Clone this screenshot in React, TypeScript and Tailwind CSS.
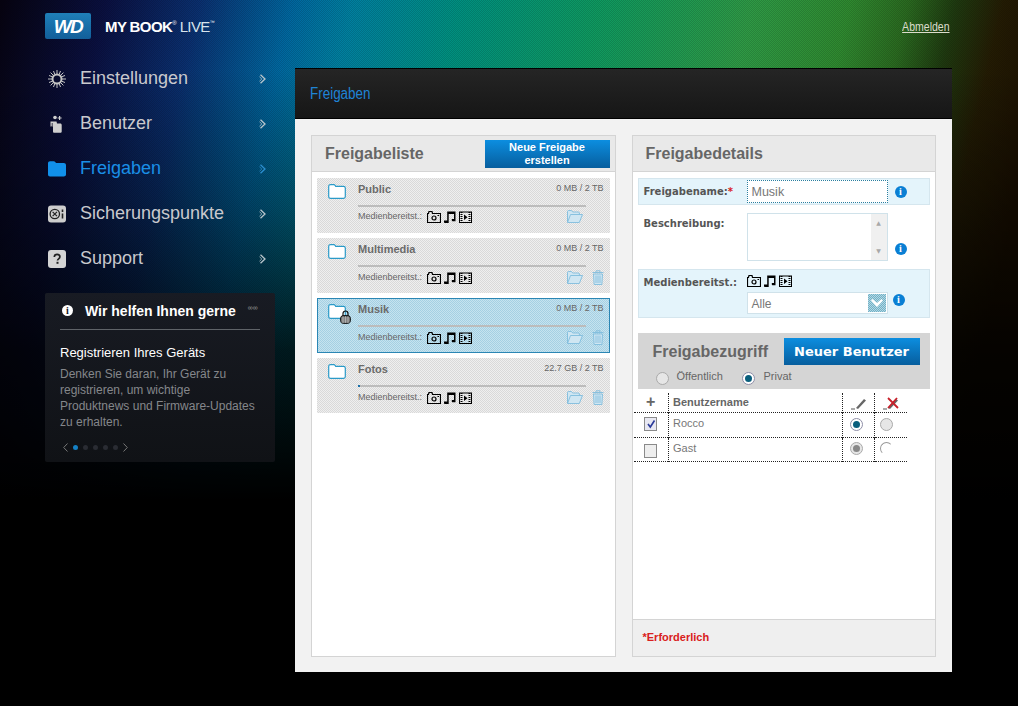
import React from 'react';

const shares = [
  { name: 'Public', size: '0 MB / 2 TB', trash: false, locked: false, used: 0 },
  { name: 'Multimedia', size: '0 MB / 2 TB', trash: true, locked: false, used: 0 },
  { name: 'Musik', size: '0 MB / 2 TB', trash: true, locked: true, used: 0 },
  { name: 'Fotos', size: '22.7 GB / 2 TB', trash: true, locked: false, used: 1 },
];

const GearIcon = () => (
  <svg width="18" height="18" viewBox="0 0 18 18" fill="none" stroke="#c4c4c4">
    <circle cx="9" cy="9" r="4.500" strokeWidth="2" />
    <path strokeWidth="1" d="M9 0v4M9 14v4M0 9h4M14 9h4M2.600 2.600l2.800 2.800M12.600 12.600l2.800 2.800M15.400 2.600l-2.800 2.800M5.400 12.600l-2.800 2.800M5.500 1l1.300 3.400M12.500 1l-1.300 3.400M5.500 17l1.300-3.400M12.500 17l-1.300-3.400M1 5.500l3.400 1.300M1 12.500l3.400-1.300M17 5.500l-3.400 1.300M17 12.500l-3.400-1.300" />
  </svg>
);

const UserIcon = () => (
  <svg width="18" height="18" viewBox="0 0 18 18" fill="#cfcfcf">
    <circle cx="7" cy="2.500" r="1.800" />
    <path d="M11 1h1.200v1.400h1.400v1.200h-1.400V5H11V3.600H9.600V2.400H11z" />
    <path d="M2.500 6.500h6l.5 2h3.200c1 0 1.500.6 1.500 1.500v6.500c0 .8-.5 1.300-1.300 1.300H6.300c-.8 0-1.300-.5-1.300-1.300v-4.800H2.500z" />
    <path d="M4.200 8v3M2.500 11.700h2.500" stroke="#10122a" strokeWidth=".8" />
  </svg>
);

const FolderIcon = () => (
  <svg width="18" height="16" viewBox="0 0 18 16" fill="#1190ea">
    <path d="M0 2.200C0 1 .8.200 2 .200h3.600c.8 0 1.300.3 1.800 1l.7.900H15.800C17 2.100 18 3 18 4.200v9.200c0 1.200-1 2-2.200 2H2c-1.200 0-2-.8-2-2z" />
  </svg>
);

const SafeIcon = () => (
  <svg width="18" height="18" viewBox="0 0 18 18">
    <rect width="18" height="17" y=".5" rx="3" fill="#cdcdcd" />
    <circle cx="6.800" cy="9" r="4.700" fill="none" stroke="#222" strokeWidth="1.300" />
    <path d="M4.600 6.800l4.400 4.400M9 6.800l-4.400 4.400" stroke="#222" strokeWidth="1.200" />
    <path d="M14.500 4.500v2.500M14.500 8.500v5" stroke="#222" strokeWidth="1.600" />
  </svg>
);

const HelpIcon = () => (
  <svg width="18" height="18" viewBox="0 0 18 18">
    <rect width="18" height="18" rx="3" fill="#d4d4d4" />
    <path d="M6.300 7c0-1.800 1.200-2.700 2.800-2.700S11.900 5.200 11.900 6.800c0 2-2.400 2-2.400 3.800" fill="none" stroke="#222" strokeWidth="1.700" />
    <rect x="8.500" y="11.800" width="2" height="2" fill="#222" />
  </svg>
);

const Chevron = ({ active }: { active?: boolean }) => (
  <svg width="8" height="10" viewBox="0 0 8 10" fill="none" stroke={active ? '#2c8fd0' : '#b9c6cc'} strokeWidth="1.300">
    <path d="M1.500.8L6 5l-4.500 4.200" />
    <path d="M.5 2.800L2.800 5 .5 7.200" strokeWidth=".8" />
  </svg>
);

const PhotoGlyph = () => (
  <svg width="14" height="12" viewBox="0 0 14 12" fill="none" stroke="#000">
    <path d="M.5 2.500h1l.5-2h3l.5 2h8v9H.5z" strokeWidth="1.200" />
    <circle cx="7" cy="7" r="2" strokeWidth="1.200" />
    <rect x="10.500" y="4" width="1.500" height="1" fill="#000" stroke="none" />
  </svg>
);

const MusicGlyph = () => (
  <svg width="12" height="12" viewBox="0 0 12 12" fill="#000">
    <path d="M3.200.5h8.300v9H10V3H4.700v7.500H3.200zM0 9.500h4.700V12H1C.4 12 0 11.500 0 11zM7.800 8h3.700v2.300H8.800c-.6 0-1-.4-1-1z" />
  </svg>
);

const FilmGlyph = () => (
  <svg width="13" height="12" viewBox="0 0 13 12" fill="none" stroke="#000">
    <rect x=".5" y="1" width="12" height="10.500" />
    <path d="M2.500 1v10.500M10.500 1v10.500" strokeDasharray="1 1" strokeWidth="2" />
    <path d="M5 3.500l3.500 2.700L5 9z" fill="#000" stroke="none" />
  </svg>
);

const MediaGlyphs = () => (
  <div className="flex items-center gap-[3px]">
    <PhotoGlyph />
    <MusicGlyph />
    <FilmGlyph />
  </div>
);

const ShareFolder = ({ locked }: { locked: boolean }) => (
  <div className="relative h-[15px] w-[18px]">
    <svg width="18" height="15" viewBox="0 0 18 15" fill="#fff" stroke="#2a9ac8" strokeWidth="1.200">
      <path d="M.7 2.500C.7 1.300 1.300.7 2.500.7h3.300c.7 0 1 .2 1.400.8l.5.8h7.800c1 0 1.800.7 1.800 1.700v8.500c0 1-.8 1.800-1.800 1.800H2.500c-1 0-1.800-.8-1.800-1.800z" />
    </svg>
    {locked && (
      <svg className="absolute -bottom-[5px] -right-[5px]" width="11" height="14" viewBox="0 0 11 14">
        <path d="M3 6V3.500a2.500 2.500 0 015 0V6" fill="none" stroke="#111" strokeWidth="1.200" />
        <rect x=".7" y="5.700" width="9.600" height="7.600" rx="2.500" fill="#666" stroke="#000" />
        <path d="M1 8h9M1 10h9M1 12h9M3 6v7M5.500 6v7M8 6v7" stroke="#ddd" strokeWidth=".5" />
      </svg>
    )}
  </div>
);

const OpenFolder = () => (
  <svg width="16" height="13" viewBox="0 0 16 13" fill="#cfe6f2" stroke="#7fbcdc" strokeWidth=".9">
    <path d="M.5 12V1.500C.5 1 .9.500 1.500.500h3l1.200 1.500h5.800c.5 0 .9.400.9 1V4.500" />
    <path d="M.5 12.500L3.500 4.500h12l-3.200 8z" />
  </svg>
);

const TrashIcon = () => (
  <svg width="12" height="15" viewBox="0 0 12 15" fill="#cfe6f2" stroke="#7fbcdc" strokeWidth=".9">
    <path d="M.5 2.500h11M4 2.300V.8h4v1.500" fill="none" />
    <path d="M1.500 4h9l-.6 10.500H2.100z" />
    <path d="M4 5.500v7.500M6 5.500v7.500M8 5.500v7.500" fill="none" />
  </svg>
);

const InfoDot = () => (
  <span className="flex h-[12px] w-[12px] shrink-0 items-center justify-center rounded-full bg-[#0a7fd4] font-['Liberation_Serif',serif] text-[10px] font-bold leading-none text-white">
    i
  </span>
);

const Radio = ({ on, muted, cut }: { on?: boolean; muted?: boolean; cut?: boolean }) => (
  <span
    className={`inline-flex h-[13px] w-[13px] items-center justify-center rounded-full border align-middle ${
      cut ? 'border-[#999] border-r-transparent border-b-white bg-white' : on && !muted ? 'border-[#8f8fa8] bg-white' : 'border-[#aaa] bg-[#e6e6e6]'
    }`}
  >
    {on && <span className={`h-[7px] w-[7px] rounded-full ${muted ? 'bg-[#888]' : 'bg-[#0a5f7d]'}`} />}
  </span>
);

const PenIcon = ({ cross }: { cross?: boolean }) => (
  <svg className="inline align-middle" width="18" height="14" viewBox="0 0 18 14" fill="none">
    <path d="M1 13h4" stroke="#555" />
    <path d="M6 12l8-9 2 1.500L8 13z" fill="#666" />
    {cross && <path d="M6 2l10 10M15 2L6 12" stroke="#c8202a" strokeWidth="1.800" />}
  </svg>
);

const NavItem = ({ label, icon, active }: { label: string; icon: React.ReactNode; active?: boolean }) => (
  <div className="flex h-[45px] items-center">
    <div className="flex w-[35px] items-center pl-[3px]">{icon}</div>
    <span className={`w-[179px] text-[18px] ${active ? 'text-[#1a8fe6]' : 'text-[#c9c9cd]'}`}>{label}</span>
    <Chevron active={active} />
  </div>
);

const ShareRow = ({ share }: { share: (typeof shares)[number] }) => {
  const selected = share.locked;
  return (
    <div
      className={`flex h-[55px] bg-[length:2px_2px] ${
        selected
          ? 'border border-[#2a86b4] bg-[conic-gradient(#a5d0e3_25%,#c6e3ef_0_50%,#a5d0e3_0_75%,#c6e3ef_0)]'
          : 'bg-[conic-gradient(#d9d9d9_25%,#efefef_0_50%,#d9d9d9_0_75%,#efefef_0)]'
      }`}
    >
      <div className={`shrink-0 ${selected ? 'w-[40px] pl-[10px] pt-[5px]' : 'w-[41px] pl-[11px] pt-[6px]'}`}>
        <ShareFolder locked={share.locked} />
      </div>
      <div className={`flex-1 ${selected ? 'pr-[5px] pt-[3px]' : 'pr-[6px] pt-[4px]'}`}>
        <div className="flex h-[14px] items-center justify-between">
          <span className="text-[11px] font-bold text-[#6b6b6b]">{share.name}</span>
          <span className="text-[9px] text-[#666]">{share.size}</span>
        </div>
        <div className="mt-[9px] mr-[18px] h-[2px] bg-[#bcbcbc]">
          {share.used > 0 && <div className="h-[2px] w-[2px] bg-[#1a6fa8]" />}
        </div>
        <div className="mt-[3px] flex items-center">
          <span className="w-[69px] text-[9px] text-[#666]">Medienbereitst.:</span>
          <MediaGlyphs />
          <div className="ml-auto flex items-center gap-[9px]">
            <OpenFolder />
            {share.trash ? <TrashIcon /> : <span className="w-[12px]" />}
          </div>
        </div>
      </div>
    </div>
  );
};

export default function App() {
  return (
    <div className="relative h-[706px] w-[1018px] overflow-hidden bg-black bg-[length:2px_2px,auto,auto] font-['Liberation_Sans',Arial,sans-serif] bg-[conic-gradient(rgba(0,0,0,0.14)_25%,rgba(0,0,0,0)_0_50%,rgba(0,0,0,0.14)_0_75%,rgba(0,0,0,0)_0),linear-gradient(180deg,rgba(0,0,0,0)_0,rgba(0,0,0,0)_70px,rgba(0,0,0,0.35)_200px,rgba(0,0,0,0.8)_350px,#000_500px),linear-gradient(103deg,#060310_0,#0a1040_9%,#0a3070_17%,#0068a0_25%,#0080a0_30%,#009080_39%,#0f9a60_51%,#2f9a45_64%,#2f8a30_72%,#2a6a20_77%,#1f3a10_81%,#241c04_85%,#1c1000_90%)]">
      <div className="flex">
        {/* Left column */}
        <div className="w-[295px] shrink-0 pl-[45px]">
          <div className="flex h-[56px] items-start pt-[13px]">
            <div className="flex h-[26px] w-[46px] items-center justify-center rounded-[2px] bg-gradient-to-b from-[#1f7fb8] to-[#125f9a] text-[19px] font-bold italic leading-none tracking-[-1.5px] text-white">
              WD
            </div>
            <div className="ml-[14px] flex h-[26px] items-center text-[15px] leading-none text-white">
              <span className="font-bold tracking-[-0.6px]">MY BOOK</span>
              <span className="mb-[6px] text-[6px]">®</span>
              <span className="ml-[3px] font-normal tracking-[-0.6px] text-[#d8e4ec]">LIVE</span>
              <span className="mb-[7px] text-[5px]">™</span>
            </div>
          </div>
          <div className="w-[230px]">
            <NavItem label="Einstellungen" icon={<GearIcon />} />
            <NavItem label="Benutzer" icon={<UserIcon />} />
            <NavItem label="Freigaben" icon={<FolderIcon />} active />
            <NavItem label="Sicherungspunkte" icon={<SafeIcon />} />
            <NavItem label="Support" icon={<HelpIcon />} />
            <div className="mt-[12px] h-[169px] rounded-[2px] bg-gradient-to-b from-[#181b23] to-[#101216] px-[15px] pt-[10px]">
              <div className="flex h-[27px] items-start border-b border-[#5f6368]">
                <span className="mt-[2px] ml-[2px] flex h-[11px] w-[11px] items-center justify-center rounded-full bg-white font-['Liberation_Serif',serif] text-[10px] font-bold leading-none text-[#14161c]">
                  i
                </span>
                <span className="ml-[12px] text-[14px] font-bold leading-[16px] text-white">Wir helfen Ihnen gerne</span>
                <span className="ml-[12px] mt-[1px] text-[7px] leading-[8px] text-[#9a9a9a]">∞∞</span>
              </div>
              <div className="mt-[15px] text-[13px] leading-[15px] text-white">Registrieren Ihres Geräts</div>
              <p className="mt-[6px] w-[200px] text-[12px] leading-[16px] text-[#85878b]">
                Denken Sie daran, Ihr Gerät zu registrieren, um wichtige Produktnews und Firmware-Updates zu erhalten.
              </p>
              <div className="mt-[13px] ml-[3px] flex items-center gap-[5px]">
                <svg width="5" height="9" viewBox="0 0 5 9" fill="none" stroke="#777"><path d="M4.500.5L.7 4.500l3.800 4" /></svg>
                <span className="h-[5px] w-[5px] rounded-full bg-[#1580c4]" />
                <span className="h-[5px] w-[5px] rounded-full bg-[#2a2c33]" />
                <span className="h-[5px] w-[5px] rounded-full bg-[#2a2c33]" />
                <span className="h-[5px] w-[5px] rounded-full bg-[#2a2c33]" />
                <span className="h-[5px] w-[5px] rounded-full bg-[#2a2c33]" />
                <svg width="5" height="9" viewBox="0 0 5 9" fill="none" stroke="#777"><path d="M.5.5l3.800 4-3.800 4" /></svg>
              </div>
            </div>
          </div>
        </div>

        {/* Right column */}
        <div className="w-[657px] shrink-0">
          <div className="flex h-[68px] items-start justify-end pr-[2px] pt-[20px]">
            <a className="origin-right scale-x-[0.81] text-[13px] leading-[14px] text-[#dcdccc] underline">Abmelden</a>
          </div>
          <div className="flex h-[51px] items-center border-y border-black bg-gradient-to-b from-[#252525] to-[#161616] pl-[15px]">
            <span className="origin-left scale-x-[0.84] text-[16px] text-[#1f84d6]">Freigaben</span>
          </div>
          <div className="flex h-[553px] gap-[16px] bg-[#f2f2f2] p-[16px] pb-[15px]">
            {/* Share list */}
            <div className="flex w-[305px] flex-col border border-[#d4d4d4] bg-white">
              <div className="flex h-[36px] shrink-0 items-center justify-between border-b border-[#d4d4d4] bg-[#e9e9e9] pl-[13px] pr-[5px]">
                <span className="text-[16px] font-bold text-[#666]">Freigabeliste</span>
                <button className="h-[28px] w-[125px] bg-gradient-to-b from-[#0c8ee0] to-[#075e9e] text-[11px] font-bold leading-[13px] text-white">
                  Neue Freigabe
                  <br />
                  erstellen
                </button>
              </div>
              <div className="flex flex-col gap-[5px] px-[5px] pt-[6px]">
                {shares.map((s) => (
                  <ShareRow key={s.name} share={s} />
                ))}
              </div>
            </div>

            {/* Share details */}
            <div className="flex w-[305px] flex-col border border-[#d4d4d4] bg-white">
              <div className="flex h-[36px] shrink-0 items-center border-b border-[#d4d4d4] bg-[#e9e9e9] pl-[13px]">
                <span className="text-[16px] font-bold text-[#666]">Freigabedetails</span>
              </div>
              <div className="flex-1 px-[5px] pt-[6px] font-['DejaVu_Sans',sans-serif]">
                <div className="flex h-[27px] items-center border border-[#d5e6ee] bg-[#e4f4fb] pl-[5px]">
                  <span className="w-[103px] pb-[1px] text-[10px] font-bold text-[#555]">
                    Freigabename:<span className="text-[#d92020]">*</span>
                  </span>
                  <div className="flex h-[23px] w-[141px] items-center border border-dotted border-[#2a7fa0] bg-white pl-[4px] pt-[1px] font-['Liberation_Sans',sans-serif] text-[12.5px] text-[#777]">
                    Musik
                  </div>
                  <span className="ml-[7px]"><InfoDot /></span>
                </div>

                <div className="flex h-[64px] pl-[6px] pt-[8px]">
                  <span className="w-[103px] pt-[3px] text-[10px] font-bold text-[#555]">Beschreibung:</span>
                  <div className="flex h-[48px] w-[141px] justify-end border border-[#d0e2ea] bg-white">
                    <div className="flex w-[16px] flex-col items-center justify-between bg-[#f0f0f0] py-[6px] text-[6px] leading-none text-[#a8a8a8]">
                      <span>▲</span>
                      <span>▼</span>
                    </div>
                  </div>
                  <span className="ml-[7px] mt-[30px]"><InfoDot /></span>
                </div>

                <div className="flex h-[49px] border border-[#d5e6ee] bg-[#e4f4fb] pl-[5px] pt-[5px]">
                  <span className="w-[103px] text-[10px] font-bold text-[#555]">Medienbereitst.:</span>
                  <div className="w-[141px]">
                    <MediaGlyphs />
                    <div className="mt-[5px] flex h-[22px] items-center justify-between border border-[#d0e2ea] bg-white pl-[4px] pr-[1px] font-['Liberation_Sans',sans-serif] text-[12px] text-[#777]">
                      <span className="pt-[1px]">Alle</span>
                      <span className="flex h-[18px] w-[18px] items-center justify-center bg-[conic-gradient(#6fb2c8_25%,#b5d6e2_0_50%,#6fb2c8_0_75%,#b5d6e2_0)] bg-[length:2px_2px]">
                        <svg width="12" height="8" viewBox="0 0 12 8" fill="#fff"><path d="M0 1.500L1.500 0 6 4l4.500-4L12 1.500 6 8z" /></svg>
                      </span>
                    </div>
                  </div>
                  <span className="ml-[5px] mt-[19px]"><InfoDot /></span>
                </div>

                <div className="mt-[15px] h-[56px] bg-[#d5d5d5] pl-[15px] pt-[5px]">
                  <div className="flex h-[27px] items-center">
                    <span className="w-[131px] font-['Liberation_Sans',sans-serif] text-[16px] font-bold text-[#666]">Freigabezugriff</span>
                    <button className="h-[27px] w-[136px] bg-gradient-to-b from-[#0c8ee0] to-[#075e9e] text-[13px] font-bold text-white">
                      Neuer Benutzer
                    </button>
                  </div>
                  <div className="mt-[3px] flex items-center pl-[3px] font-['Liberation_Sans',sans-serif] text-[11px] text-[#666]">
                    <Radio />
                    <span className="ml-[8px] w-[65px] pb-[4px]">Öffentlich</span>
                    <Radio on />
                    <span className="ml-[9px] pb-[4px]">Privat</span>
                  </div>
                </div>

                <table className="-ml-[4px] mt-[4px] w-[273px] table-fixed border-collapse font-['Liberation_Sans',sans-serif] text-[11px] text-[#666]">
                  <colgroup>
                    <col className="w-[35px]" />
                    <col className="w-[174px]" />
                    <col className="w-[32px]" />
                    <col className="w-[32px]" />
                  </colgroup>
                  <tbody>
                    <tr className="h-[19px] border-b border-dotted border-[#222]">
                      <td className="text-center text-[16px] font-bold leading-none">+</td>
                      <td className="border-l border-dotted border-[#222] pl-[4px] font-bold">Benutzername</td>
                      <td className="border-l border-dotted border-[#222] text-center"><PenIcon /></td>
                      <td className="border-l border-dotted border-[#222] text-center"><PenIcon cross /></td>
                    </tr>
                    <tr className="h-[25px] border-b border-dotted border-[#222]">
                      <td className="pb-[2px] text-center">
                        <span className="inline-flex h-[14px] w-[13px] items-center justify-center border border-[#8a8a8a] bg-[#e8e8f2] align-middle">
                          <svg width="10" height="10" viewBox="0 0 10 10" fill="none" stroke="#2a3a9a" strokeWidth="1.600"><path d="M2 5l2.300 3L8.500 1.500" /></svg>
                        </span>
                      </td>
                      <td className="border-l border-dotted border-[#222] pl-[4px] pb-[3px] text-[#777]">Rocco</td>
                      <td className="border-l border-dotted border-[#222] pb-[2px] pr-[5px] text-center"><Radio on /></td>
                      <td className="border-l border-dotted border-[#222] pb-[2px] pr-[8px] text-center"><Radio /></td>
                    </tr>
                    <tr className="h-[24px] border-b border-dotted border-[#222]">
                      <td className="pt-[2px] text-center">
                        <span className="inline-block h-[14px] w-[13px] border border-[#8a8a8a] bg-[#eeeeee] align-middle" />
                      </td>
                      <td className="border-l border-dotted border-[#222] pl-[4px] pb-[2px] text-[#777]">Gast</td>
                      <td className="border-l border-dotted border-[#222] pb-[2px] pr-[5px] text-center"><Radio on muted /></td>
                      <td className="border-l border-dotted border-[#222] pb-[2px] pr-[8px] text-center"><Radio cut /></td>
                    </tr>
                  </tbody>
                </table>
              </div>
              <div className="flex h-[37px] shrink-0 items-center border-t border-[#d4d4d4] bg-[#efefef] pb-[2px] pl-[10px] text-[11px] font-bold text-[#d92020]">
                *Erforderlich
              </div>
            </div>
          </div>
        </div>
      </div>
    </div>
  );
}
